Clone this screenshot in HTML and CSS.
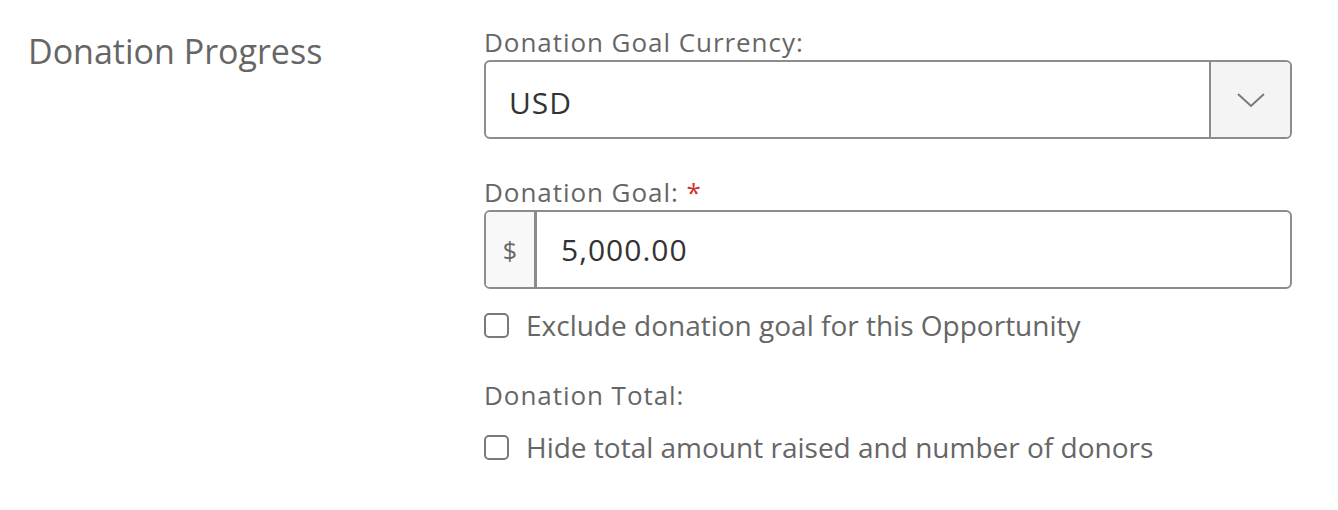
FILE: index.html
```html
<!DOCTYPE html>
<html lang="en">
<head>
<meta charset="utf-8">
<title>Donation Progress</title>
<link rel="stylesheet" href="styles.css">
</head>
<body>
<div class="section">
  <h2 class="section-title">Donation Progress</h2>
  <div class="fields">
    <div class="field">
      <label class="label">Donation Goal Currency:</label>
      <div class="select">
        <span class="select-value">USD</span>
        <span class="select-btn">
          <svg width="30" height="16" viewBox="0 0 30 16"><path d="M2 2 L15 14 L28 2" fill="none" stroke="#7a7a7a" stroke-width="2"/></svg>
        </span>
      </div>
    </div>
    <div class="field">
      <label class="label">Donation Goal: <span class="req">*</span></label>
      <div class="input-group">
        <span class="prefix">$</span>
        <span class="input-value">5,000.00</span>
      </div>
    </div>
    <label class="check"><span class="box"></span><span>Exclude donation goal for this Opportunity</span></label>
    <div class="field field-total">
      <label class="label">Donation Total:</label>
    </div>
    <label class="check"><span class="box"></span><span>Hide total amount raised and number of donors</span></label>
  </div>
</div>
</body>
</html>
```
FILE: styles.css
```css
* { box-sizing: border-box; }
html, body { margin: 0; padding: 0; background: #fff; }
body {
  font-family: "Open Sans", "Liberation Sans", sans-serif;
  color: #666;
}
.section {
  display: flex;
  padding: 24px 46px 0 28px;
}
.section-title {
  width: 456px;
  flex: none;
  margin: 0;
  font-weight: 400;
  font-size: 34px;
  line-height: 54px;
  color: #666;
}
.fields {
  flex: 1;
  display: flex;
  flex-direction: column;
}
.label {
  display: block;
  font-size: 26px;
  letter-spacing: 0.95px;
  line-height: 36px;
  color: #666;
}
.req { color: #d32f2f; }
.select {
  display: flex;
  height: 79px;
  border: 2px solid #8c8c8c;
  border-radius: 6px;
  overflow: hidden;
  margin-bottom: 35px;
}
.select-value {
  flex: 1;
  padding: 5px 0 0 23px;
  display: flex;
  align-items: center;
  font-size: 30px;
  letter-spacing: 1px;
  color: #333;
}
.select-btn {
  width: 81px;
  border-left: 2px solid #8c8c8c;
  background: #f4f4f4;
  display: flex;
  align-items: center;
  justify-content: center;
}
.input-group {
  display: flex;
  height: 79px;
  border: 2px solid #8c8c8c;
  border-radius: 6px;
  overflow: hidden;
}
.prefix {
  width: 51px;
  background: #f8f8f8;
  border-right: 3px solid #8c8c8c;
  display: flex;
  align-items: center;
  justify-content: center;
  font-size: 25px;
  color: #666;
}
.input-value {
  flex: 1;
  padding-left: 24px;
  display: flex;
  align-items: center;
  font-size: 30px;
  letter-spacing: 1px;
  color: #333;
}
.check {
  display: flex;
  align-items: center;
  gap: 17px;
  font-size: 28px;
  color: #666;
  margin-top: 19px;
  line-height: 34px;
}
.box {
  width: 25px;
  height: 25px;
  border: 2px solid #7a7a7a;
  border-radius: 5px;
  flex: none;
}
.field-total { margin-top: 35px; }
.field-total + .check { margin-top: 17px; }
```
